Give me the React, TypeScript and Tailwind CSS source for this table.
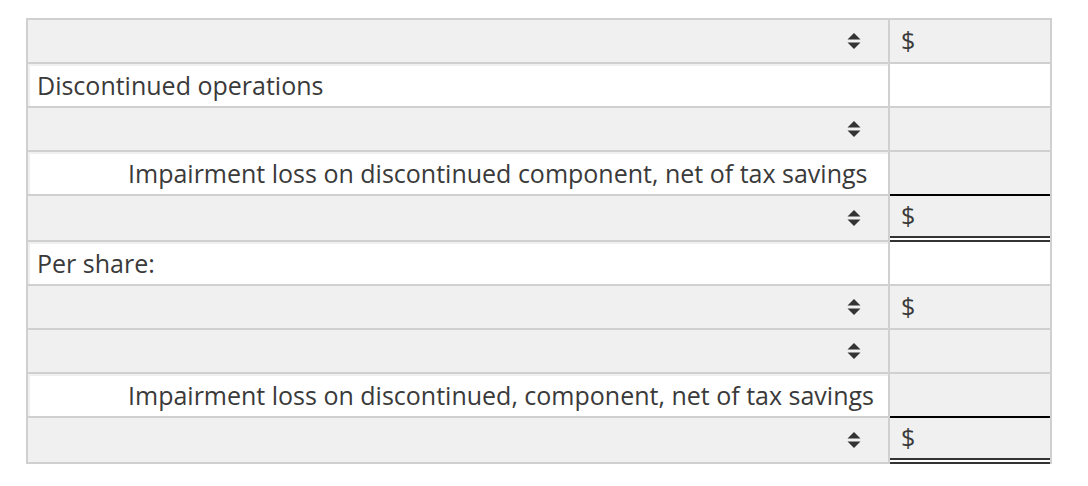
import React from "react";

type Row = {
  label?: string;
  indent?: boolean;
  select?: boolean;
  dollar?: boolean;
  whiteLeft?: boolean;
  whiteRight?: boolean;
  rightBottom?: "single" | "double" | "none";
};

const rows: Row[] = [
  { select: true, dollar: true },
  { label: "Discontinued operations", whiteLeft: true, whiteRight: true },
  { select: true },
  { label: "Impairment loss on discontinued component, net of tax savings", indent: true, whiteLeft: true, rightBottom: "single" },
  { select: true, dollar: true, rightBottom: "double" },
  { label: "Per share:", whiteLeft: true, whiteRight: true },
  { select: true, dollar: true },
  { select: true },
  { label: "Impairment loss on discontinued, component, net of tax savings", indent: true, whiteLeft: true, rightBottom: "single" },
  { select: true, dollar: true, rightBottom: "double" },
];

function Arrows() {
  return (
    <svg width="14" height="18" viewBox="0 0 14 18" className="shrink-0">
      <path d="M7 1 L13.5 7.5 L0.5 7.5 Z" fill="#333" />
      <path d="M7 17 L13.5 10.5 L0.5 10.5 Z" fill="#333" />
    </svg>
  );
}

export default function App() {
  return (
    <div
      className="w-[1088px] h-[486px] bg-white pt-[18px] pl-[26px]"
      style={{ fontFamily: '"Open Sans", "Noto Sans", sans-serif' }}
    >
      <div className="w-[1026px] border-t-2 border-l-2 border-[#d0d0d0]">
        {rows.map((r, i) => {
          const rb = r.rightBottom ?? "none";
          return (
            <div key={i} className={`flex ${rb === "double" ? "h-[46px]" : "h-[44px]"}`}>
              <div
                className={`w-[862px] border-b-2 border-r-2 border-[#d0d0d0] flex items-center ${
                  r.whiteLeft ? "bg-[#f0f0f0] p-[2px] pr-0 pb-0" : "bg-[#f0f0f0]"
                }`}
              >
                {r.whiteLeft ? (
                  <div
                    className={`h-full w-full bg-white flex items-center text-[25px] leading-[1.3] text-[#3a3a3a] pb-[2px] ${
                      r.indent ? "pl-[98px]" : "pl-[7px]"
                    }`}
                  >
                    {r.label}
                  </div>
                ) : (
                  <div className="w-full flex justify-end pr-[27px]">
                    {r.select && <Arrows />}
                  </div>
                )}
              </div>
              <div
                className={`w-[162px] border-r-2 border-[#d0d0d0] flex flex-col ${
                  r.whiteRight ? "bg-white" : "bg-[#f0f0f0]"
                } ${rb === "none" ? "border-b-2 border-b-[#d0d0d0]" : ""}`}
              >
                <div className="flex-1 flex items-center pl-[11px] text-[25px] text-[#3a3a3a]">
                  {r.dollar ? "$" : ""}
                </div>
                {rb === "single" && <div className="h-[2px] bg-black" />}
                {rb === "double" && (
                  <div className="flex flex-col">
                    <div className="h-[2px] bg-[#333]" />
                    <div className="h-[2px] bg-white" />
                    <div className="h-[2px] bg-[#333]" />
                  </div>
                )}
              </div>
            </div>
          );
        })}
      </div>
    </div>
  );
}
